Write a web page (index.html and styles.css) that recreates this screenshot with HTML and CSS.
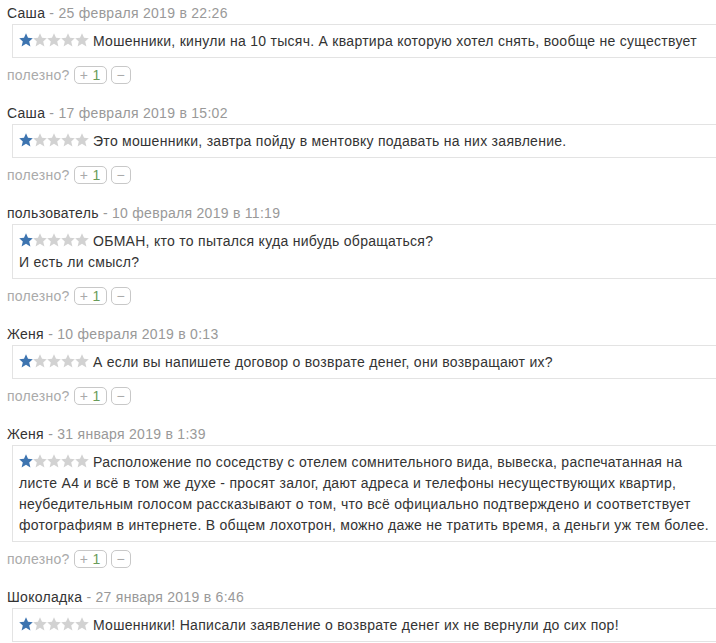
FILE: index.html
```html
<!DOCTYPE html>
<html lang="ru">
<head>
  <meta charset="UTF-8" />
  <title>Отзывы</title>
  <link rel="stylesheet" href="styles.css">
</head>
<body>
  <!-- Список отзывов -->
  <div class="comment">
    <div class="meta"><span class="author">Саша</span> - 25 февраля 2019 в 22:26</div>
    <div class="text"><span class="stars"></span>Мошенники, кинули на 10 тысяч. А квартира которую хотел снять, вообще не существует</div>
    <div class="vote">полезно? <button class="plus">+ <b>1</b></button><button class="minus">&minus;</button></div>
  </div>

  <div class="comment">
    <div class="meta"><span class="author">Саша</span> - 17 февраля 2019 в 15:02</div>
    <div class="text"><span class="stars"></span>Это мошенники, завтра пойду в ментовку подавать на них заявление.</div>
    <div class="vote">полезно? <button class="plus">+ <b>1</b></button><button class="minus">&minus;</button></div>
  </div>

  <div class="comment">
    <div class="meta"><span class="author">пользователь</span> - 10 февраля 2019 в 11:19</div>
    <div class="text"><span class="stars"></span>ОБМАН, кто то пытался куда нибудь обращаться?<br>И есть ли смысл?</div>
    <div class="vote">полезно? <button class="plus">+ <b>1</b></button><button class="minus">&minus;</button></div>
  </div>

  <div class="comment">
    <div class="meta"><span class="author">Женя</span> - 10 февраля 2019 в 0:13</div>
    <div class="text"><span class="stars"></span>А если вы напишете договор о возврате денег, они возвращают их?</div>
    <div class="vote">полезно? <button class="plus">+ <b>1</b></button><button class="minus">&minus;</button></div>
  </div>

  <div class="comment">
    <div class="meta"><span class="author">Женя</span> - 31 января 2019 в 1:39</div>
    <div class="text"><span class="stars"></span>Расположение по соседству с отелем сомнительного вида, вывеска, распечатанная на листе А4 и всё в том же духе - просят залог, дают адреса и телефоны несуществующих квартир, неубедительным голосом рассказывают о том, что всё официально подтверждено и соответствует фотографиям в интернете. В общем лохотрон, можно даже не тратить время, а деньги уж тем более.</div>
    <div class="vote">полезно? <button class="plus">+ <b>1</b></button><button class="minus">&minus;</button></div>
  </div>

  <div class="comment">
    <div class="meta"><span class="author">Шоколадка</span> - 27 января 2019 в 6:46</div>
    <div class="text"><span class="stars"></span>Мошенники! Написали заявление о возврате денег их не вернули до сих пор!</div>
    <div class="vote">полезно? <button class="plus">+ <b>1</b></button><button class="minus">&minus;</button></div>
  </div>

  <script>
    // рисуем звёзды рейтинга (у всех отзывов 1 из 5)
    const star = (color) =>
      `<svg width="14" height="14" viewBox="0 0 14 14"><path d="M7 0.3 L9 4.8 L13.8 5.2 L10.2 8.4 L11.4 13.4 L7 10.8 L2.6 13.4 L3.8 8.4 L0.2 5.2 L5 4.8 Z" fill="${color}"/></svg>`;

    document.querySelectorAll(".stars").forEach((el) => {
      let html = "";
      for (let i = 1; i <= 5; i++) {
        html += star(i <= 1 ? "#3d74b0" : "#d2d2d2");
      }
      el.innerHTML = html;
    });
  </script>
</body>
</html>
```

FILE: styles.css
```css
body {
  margin: 0;
  padding: 4px 0 0 7px;
  font-family: "Liberation Sans", Arial, sans-serif;
  font-size: 14px;
  letter-spacing: 0.28px;
  color: #999;
  background: #fff;
  overflow: hidden;
}

.comment {
  margin-bottom: 20px;
}

.meta {
  line-height: 18px;
  color: #999;
}

.author {
  color: #333;
}

.text {
  margin: 2px -1px 0 5px;
  padding: 6px 6px 5px;
  border: 1px solid #e3e3e3;
  line-height: 21px;
  color: #333;
}

.stars {
  display: inline-flex;
  margin-right: 4px;
  vertical-align: -1px;
}

.stars svg {
  display: block;
}

.vote {
  margin-top: 8px;
  line-height: 18px;
  color: #aaa;
}

.vote button {
  height: 18px;
  margin: 0 4px 0 0;
  padding: 0 5px;
  border: 1px solid #c8c8c8;
  border-radius: 5px;
  background: #fff;
  font-family: inherit;
  font-size: 14px;
  letter-spacing: 0.28px;
  line-height: 16px;
  color: #aaa;
  vertical-align: top;
}

.vote .plus b {
  font-weight: normal;
  color: #6a9c5a;
}
```
